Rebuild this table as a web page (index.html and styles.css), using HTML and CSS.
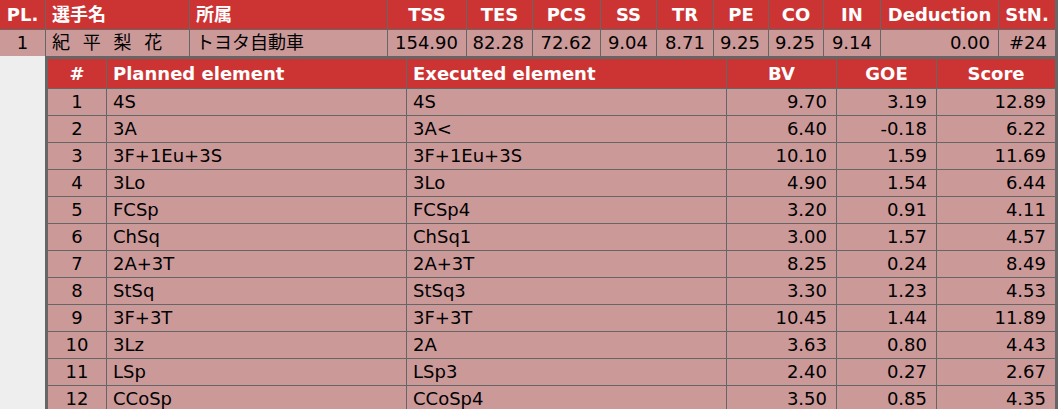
FILE: index.html
```html
<!DOCTYPE html>
<html lang="ja">
<head>
<meta charset="utf-8">
<title>Result</title>
<link rel="stylesheet" href="styles.css">
</head>
<body>
<div class="page">
  <div class="summary">
    <div class="cell hd c">PL.</div>
    <div class="cell hd l">選手名</div>
    <div class="cell hd l">所属</div>
    <div class="cell hd c">TSS</div>
    <div class="cell hd c">TES</div>
    <div class="cell hd c">PCS</div>
    <div class="cell hd c">SS</div>
    <div class="cell hd c">TR</div>
    <div class="cell hd c">PE</div>
    <div class="cell hd c">CO</div>
    <div class="cell hd c">IN</div>
    <div class="cell hd c">Deduction</div>
    <div class="cell hd c">StN.</div>

    <div class="cell dt c">1</div>
    <div class="cell dt l"><span class="name">紀 平 梨 花</span></div>
    <div class="cell dt l">トヨタ自動車</div>
    <div class="cell dt r">154.90</div>
    <div class="cell dt r">82.28</div>
    <div class="cell dt r">72.62</div>
    <div class="cell dt r">9.04</div>
    <div class="cell dt r">8.71</div>
    <div class="cell dt r">9.25</div>
    <div class="cell dt r">9.25</div>
    <div class="cell dt r">9.14</div>
    <div class="cell dt r">0.00</div>
    <div class="cell dt r">#24</div>
  </div>

  <div class="detail-row">
    <div class="spacer"></div>
    <div class="detail">
      <div class="elements">
        <div class="cell hd c">#</div>
        <div class="cell hd l">Planned element</div>
        <div class="cell hd l">Executed element</div>
        <div class="cell hd c">BV</div>
        <div class="cell hd c">GOE</div>
        <div class="cell hd c">Score</div>

        <div class="cell dt c">1</div><div class="cell dt l">4S</div><div class="cell dt l">4S</div><div class="cell dt r">9.70</div><div class="cell dt r">3.19</div><div class="cell dt r">12.89</div>
        <div class="cell dt c">2</div><div class="cell dt l">3A</div><div class="cell dt l">3A&lt;</div><div class="cell dt r">6.40</div><div class="cell dt r">-0.18</div><div class="cell dt r">6.22</div>
        <div class="cell dt c">3</div><div class="cell dt l">3F+1Eu+3S</div><div class="cell dt l">3F+1Eu+3S</div><div class="cell dt r">10.10</div><div class="cell dt r">1.59</div><div class="cell dt r">11.69</div>
        <div class="cell dt c">4</div><div class="cell dt l">3Lo</div><div class="cell dt l">3Lo</div><div class="cell dt r">4.90</div><div class="cell dt r">1.54</div><div class="cell dt r">6.44</div>
        <div class="cell dt c">5</div><div class="cell dt l">FCSp</div><div class="cell dt l">FCSp4</div><div class="cell dt r">3.20</div><div class="cell dt r">0.91</div><div class="cell dt r">4.11</div>
        <div class="cell dt c">6</div><div class="cell dt l">ChSq</div><div class="cell dt l">ChSq1</div><div class="cell dt r">3.00</div><div class="cell dt r">1.57</div><div class="cell dt r">4.57</div>
        <div class="cell dt c">7</div><div class="cell dt l">2A+3T</div><div class="cell dt l">2A+3T</div><div class="cell dt r">8.25</div><div class="cell dt r">0.24</div><div class="cell dt r">8.49</div>
        <div class="cell dt c">8</div><div class="cell dt l">StSq</div><div class="cell dt l">StSq3</div><div class="cell dt r">3.30</div><div class="cell dt r">1.23</div><div class="cell dt r">4.53</div>
        <div class="cell dt c">9</div><div class="cell dt l">3F+3T</div><div class="cell dt l">3F+3T</div><div class="cell dt r">10.45</div><div class="cell dt r">1.44</div><div class="cell dt r">11.89</div>
        <div class="cell dt c">10</div><div class="cell dt l">3Lz</div><div class="cell dt l">2A</div><div class="cell dt r">3.63</div><div class="cell dt r">0.80</div><div class="cell dt r">4.43</div>
        <div class="cell dt c">11</div><div class="cell dt l">LSp</div><div class="cell dt l">LSp3</div><div class="cell dt r">2.40</div><div class="cell dt r">0.27</div><div class="cell dt r">2.67</div>
        <div class="cell dt c">12</div><div class="cell dt l">CCoSp</div><div class="cell dt l">CCoSp4</div><div class="cell dt r">3.50</div><div class="cell dt r">0.85</div><div class="cell dt r">4.35</div>
      </div>
    </div>
  </div>
</div>
</body>
</html>
```

FILE: styles.css
```css
html, body {
  margin: 0;
  padding: 0;
}
body {
  background: #eeeeee;
  font-family: "DejaVu Sans", "Noto Sans CJK JP", sans-serif;
  font-size: 18px;
  color: #000;
}
.page {
  width: 1055px;
  border-right: 3px solid #666666;
}
.summary {
  display: grid;
  grid-template-columns: 45px 143px 197px 78px 65px 67px 55px 56px 54px 54px 56px 117px 56px;
  grid-template-rows: 29px 26px;
  gap: 1px;
  background: #666666;
}
.cell {
  display: flex;
  align-items: center;
  line-height: 1;
  white-space: nowrap;
  overflow: hidden;
}
.hd {
  background: #cc3333;
  color: #ffffff;
  font-weight: bold;
}
.dt {
  background: #cc9999;
}
.c { justify-content: center; }
.l { justify-content: flex-start; padding-left: 6px; }
.r { justify-content: flex-end; padding-right: 8px; }
.name {
  word-spacing: 7px;
}
.detail-row {
  display: flex;
}
.spacer {
  width: 45px;
  background: #eeeeee;
}
.detail {
  flex: 1;
  border-left: 3px solid #666666;
  border-top: 3px solid #666666;
}
.elements {
  display: grid;
  grid-template-columns: 58px 299px 319px 109px 99px 118px;
  grid-template-rows: 29px;
  grid-auto-rows: 26px;
  gap: 1px;
  background: #666666;
}
.elements .r { padding-right: 9px; }
```
